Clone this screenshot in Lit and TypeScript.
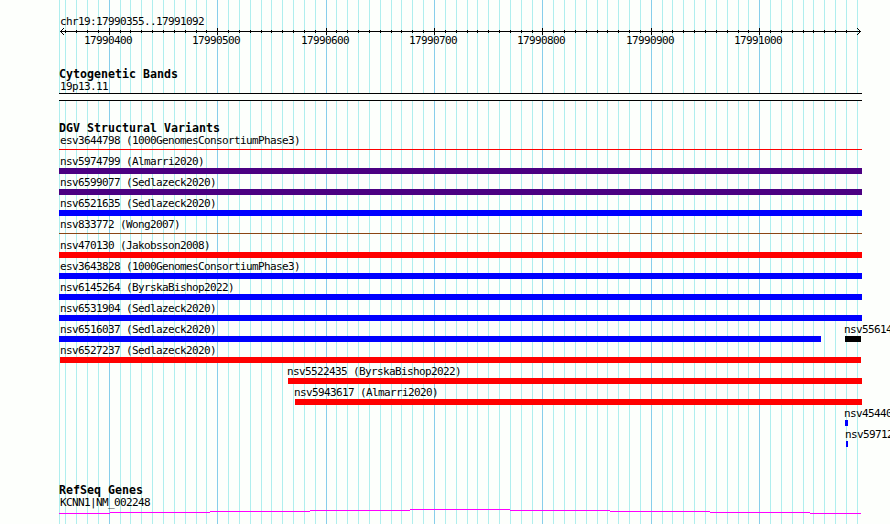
import { LitElement, html, svg, css } from 'lit';
import { customElement, property } from 'lit/decorators.js';
import { styleMap } from 'lit/directives/style-map.js';

interface Feature {
    name: string;
    start: number;
    end: number;
    color: string;
    thin?: boolean;
    labelStart?: number;
}

// Left edge of the panel and pixel position of 17990400
const PANEL_LEFT = 59;
const PANEL_RIGHT = 862;
const FIRST_MAJOR = 109.29;
const STEP = 10.84;

const gridLines = Array.from({ length: 74 }, (_, i) => i - 4).map((k) => ({
    x: Math.floor(FIRST_MAJOR + k * STEP),
    major: k % 10 === 0 && k >= 0,
    position: 17990400 + k * 10,
}));

const variants: Feature[][] = [
    [{ name: 'esv3644798 (1000GenomesConsortiumPhase3)', start: 59, end: 862, color: 'red', thin: true }],
    [{ name: 'nsv5974799 (Almarri2020)', start: 59, end: 862, color: 'indigo' }],
    [{ name: 'nsv6599077 (Sedlazeck2020)', start: 59, end: 862, color: 'indigo' }],
    [{ name: 'nsv6521635 (Sedlazeck2020)', start: 59, end: 862, color: 'blue' }],
    [{ name: 'nsv833772 (Wong2007)', start: 59, end: 862, color: 'saddlebrown', thin: true }],
    [{ name: 'nsv470130 (Jakobsson2008)', start: 59, end: 862, color: 'red' }],
    [{ name: 'esv3643828 (1000GenomesConsortiumPhase3)', start: 59, end: 862, color: 'blue' }],
    [{ name: 'nsv6145264 (ByrskaBishop2022)', start: 59, end: 862, color: 'blue' }],
    [{ name: 'nsv6531904 (Sedlazeck2020)', start: 59, end: 862, color: 'blue' }],
    [
        { name: 'nsv6516037 (Sedlazeck2020)', start: 59, end: 821, color: 'blue' },
        { name: 'nsv55614', start: 845, end: 861, color: 'black' },
    ],
    [{ name: 'nsv6527237 (Sedlazeck2020)', start: 60, end: 861, color: 'red', labelStart: 60 }],
    [{ name: 'nsv5522435 (ByrskaBishop2022)', start: 288, end: 862, color: 'red' }],
    [{ name: 'nsv5943617 (Almarri2020)', start: 295, end: 862, color: 'red' }],
    [{ name: 'nsv45440', start: 845, end: 848, color: 'blue' }],
    [{ name: 'nsv59712', start: 846, end: 848, color: 'blue', labelStart: 845 }],
];

@customElement('genome-ruler')
export class GenomeRuler extends LitElement {
    static styles = css`
        :host {
            display: block;
            height: 20px;
        }

        svg {
            display: block;
            overflow: visible;
        }

        text {
            font: 11px "DejaVu Sans Mono", monospace;
            letter-spacing: -0.622px;
        }
    `;

    render() {
        return html`
            <svg width="890" height="20" shape-rendering="crispEdges">
                <rect x="60" y="5" width="801" height="1" />
                <path d="M60 5h1v1h-1zM61 4h1v1h-1zM62 3h1v1h-1zM63 2h1v1h-1zM61 6h1v1h-1zM62 7h1v1h-1zM63 8h1v1h-1z" />
                <path d="M860 5h1v1h-1zM859 4h1v1h-1zM858 3h1v1h-1zM857 2h1v1h-1zM859 6h1v1h-1zM858 7h1v1h-1zM857 8h1v1h-1z" />
                ${gridLines.filter(({ x }) => x < 857).map(({ x, major, position }) => major
                    ? svg`
                        <rect x=${x} y="2" width="1" height="7" />
                        <text x=${x - 25} y="18">${position}</text>`
                    : svg`<rect x=${x} y="4" width="1" height="3" />`)}
            </svg>
        `;
    }
}

@customElement('feature-row')
export class FeatureRow extends LitElement {
    @property({ attribute: false }) features: Feature[] = [];

    static styles = css`
        :host {
            display: grid;
            height: 21px;
        }

        .feature {
            grid-area: 1 / 1;
            min-width: 0;
        }

        .name {
            height: 13px;
            line-height: 13px;
            white-space: pre;
        }

        .bar {
            height: 6px;
        }

        .bar.thin {
            height: 1px;
            margin-top: 2px;
        }
    `;

    render() {
        return this.features.map((f) => {
            const labelStart = f.labelStart ?? (f.start === PANEL_LEFT ? 60 : f.start - 1);
            return html`
                <div class="feature">
                    <div class="name" style=${styleMap({ marginLeft: `${labelStart}px` })}>${f.name}</div>
                    <div
                        class="bar ${f.thin ? 'thin' : ''}"
                        style=${styleMap({
                            marginLeft: `${f.start}px`,
                            width: `${f.end - f.start}px`,
                            background: f.color,
                        })}
                    ></div>
                </div>
            `;
        });
    }
}

@customElement('app-root')
export class AppRoot extends LitElement {
    static styles = css`
        :host {
            display: grid;
            width: 890px;
            height: 524px;
            overflow: hidden;
            background: #fdfffc;
            color: black;
            font: 11px/13px "DejaVu Sans Mono", monospace;
            letter-spacing: -0.622px;
        }

        .grid,
        .tracks {
            grid-area: 1 / 1;
            min-width: 0;
        }

        .tracks {
            display: flex;
            flex-direction: column;
            padding-top: 15px;
        }

        .label {
            height: 13px;
            padding-left: 60px;
        }

        .ruler {
            height: 11px;
        }

        .title {
            height: 13px;
            padding-left: 59px;
            font-size: 11.6px;
            font-weight: bold;
            letter-spacing: 0.016px;
        }

        .ruler-track {
            height: 53px;
        }

        .bands {
            height: 54px;
        }

        .bands .label,
        .genes .label {
            margin-top: -1px;
        }

        .band {
            box-sizing: border-box;
            width: 803px;
            height: 8px;
            margin-left: 59px;
            border: solid black;
            border-width: 1px 0;
            background: #fdfffc;
        }

        .variants {
            height: 362px;
        }

        .variants feature-row:first-of-type {
            margin-top: -1px;
        }

        .gene {
            display: block;
        }
    `;

    render() {
        return html`
            <svg class="grid" width="890" height="524" shape-rendering="crispEdges">
                <rect x=${PANEL_LEFT} width="1" height="524" fill="#afeeee" />
                ${gridLines.filter(({ x }) => x < PANEL_RIGHT - 1).map(({ x, major }) => svg`
                    <rect x=${x} width="1" height="524" fill=${major ? '#87ceeb' : '#afeeee'} />
                `)}
            </svg>
            <div class="tracks">
                <div class="ruler-track">
                    <div class="label ruler">chr19:17990355..17991092</div>
                    <genome-ruler></genome-ruler>
                </div>
                <div class="bands">
                    <div class="title">Cytogenetic Bands</div>
                    <div class="label">19p13.11</div>
                    <div class="band"></div>
                </div>
                <div class="variants">
                    <div class="title">DGV Structural Variants</div>
                    ${variants.map((features) => html`<feature-row .features=${features}></feature-row>`)}
                </div>
                <div class="genes">
                    <div class="title">RefSeq Genes</div>
                    <div class="label">KCNN1|NM_002248</div>
                    <svg class="gene" width="890" height="8" shape-rendering="crispEdges" fill="magenta">
                        ${[59, 110, 210, 310, 410, 510, 610, 710, 810].map((x, i, xs) => svg`
                            <rect x=${x} y=${Math.abs(i - 4)} width=${(xs[i + 1] ?? 861) - x} height="1" />
                        `)}
                    </svg>
                </div>
            </div>
        `;
    }
}
